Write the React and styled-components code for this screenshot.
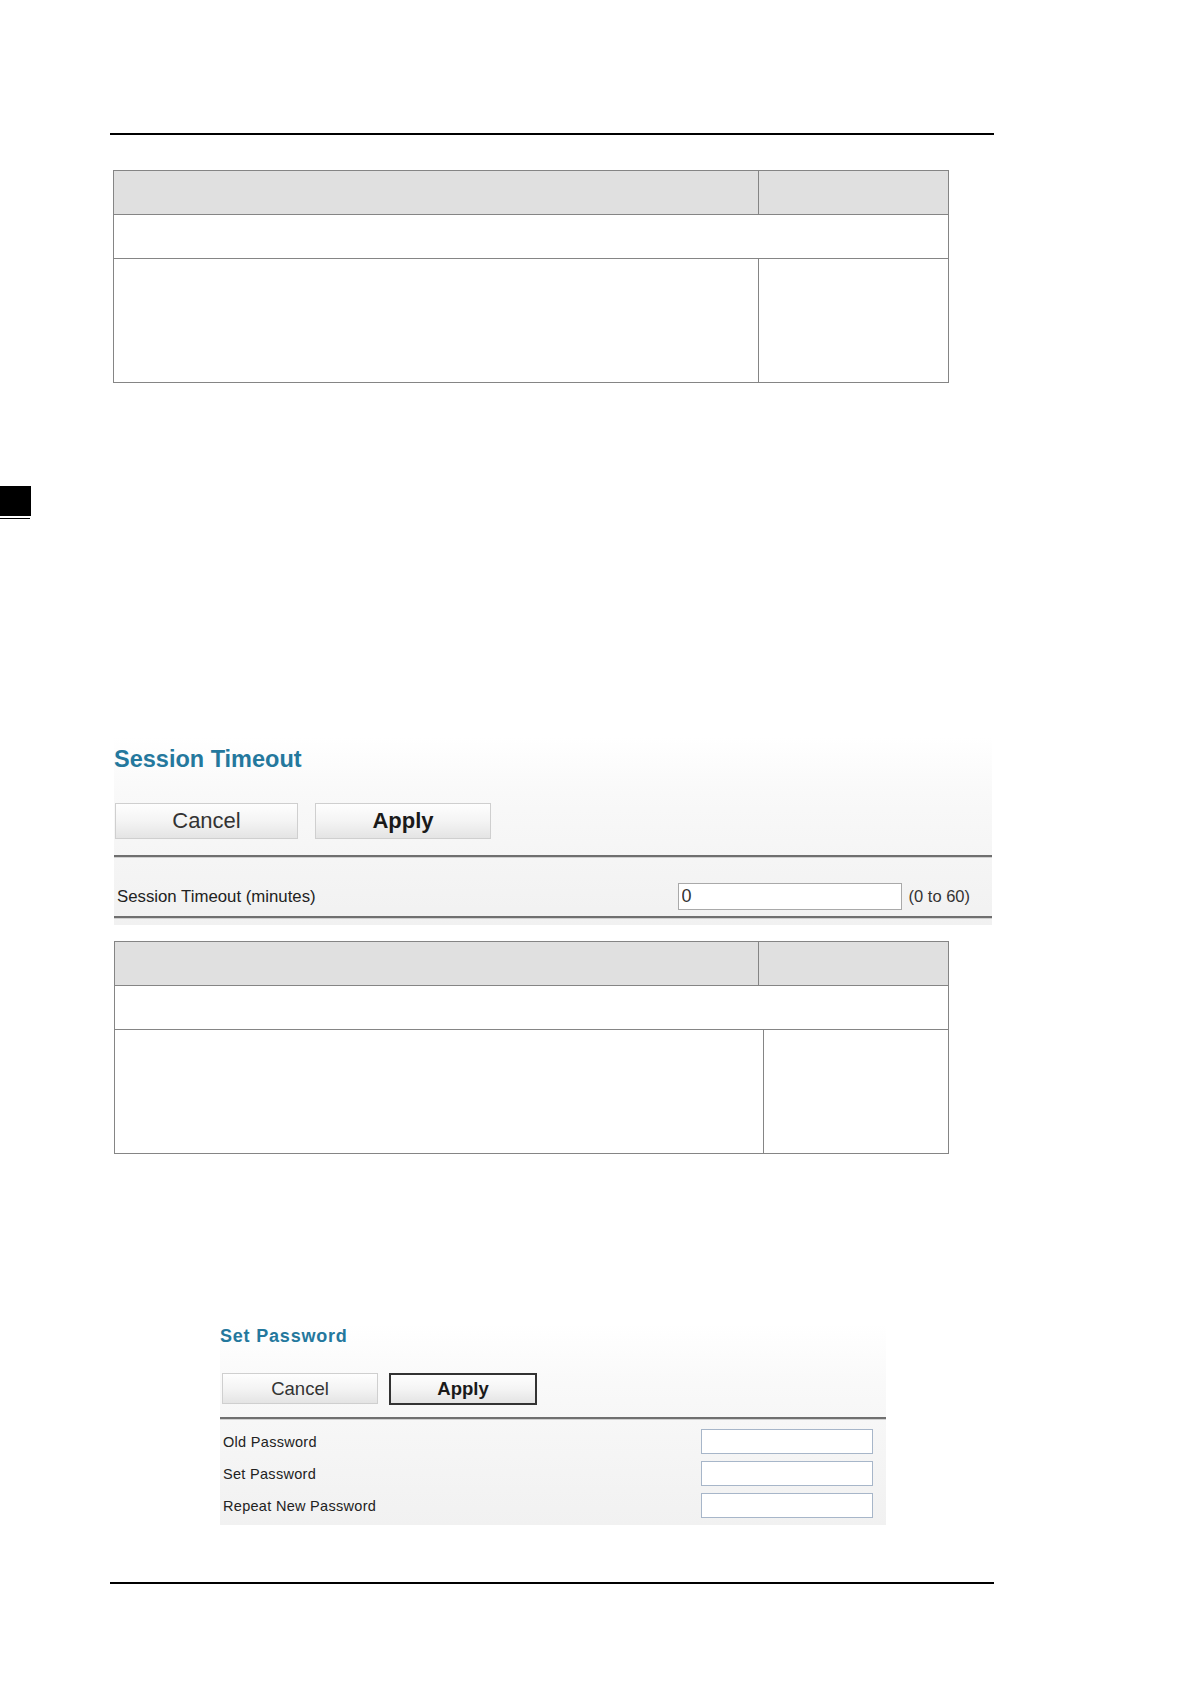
import React from "react";
import styled, { createGlobalStyle } from "styled-components";

const Global = createGlobalStyle`
  html, body { margin: 0; padding: 0; background: #fff; }
  body { font-family: "Liberation Sans", Arial, sans-serif; color: #222; }
  * { box-sizing: border-box; }
`;

const Page = styled.div`
  width: 1191px;
  min-height: 1684px;
  display: flex;
  flex-direction: column;
  background: #fff;
`;

const Rule = styled.div`
  margin-top: ${(p) => p.$top}px;
  margin-left: 110px;
  width: 884px;
  height: ${(p) => p.$thick}px;
  background: #000;
`;

const Table = styled.div`
  margin-top: ${(p) => p.$top}px;
  margin-left: ${(p) => p.$left}px;
  width: ${(p) => 949 - p.$left}px;
  border: 1px solid #858585;
  display: flex;
  flex-direction: column;
`;

const Row = styled.div`
  display: flex;
  height: ${(p) => p.$h}px;
  background: ${(p) => (p.$head ? "#e0e0e0" : "#fff")};
  & + & { border-top: 1px solid #858585; }
`;

const Cell = styled.div`
  flex: ${(p) => (p.$w ? `0 0 ${p.$w}px` : "1 1 auto")};
  & + & {
    border-left: 1px solid #858585;
    box-shadow: ${(p) => (p.$bevel ? "inset 1px 0 0 #fafafa" : "none")};
  }
`;

const Thumb = styled.div`
  margin-top: 103px;
  width: 31px;
  height: 30px;
  background: #000;
`;

const ThumbLine = styled.div`
  margin-top: 2px;
  width: 30px;
  height: 1px;
  background: #000;
`;

const Panel = styled.section`
  margin-top: ${(p) => p.$top}px;
  margin-left: ${(p) => p.$left}px;
  width: ${(p) => p.$width}px;
  padding: ${(p) => p.$pad};
  display: flex;
  flex-direction: column;
  background: linear-gradient(to bottom, #ffffff 0%, #f9f9f9 30%, #f1f1f1 100%);
`;

const Title = styled.h2`
  margin: 0;
  padding-left: ${(p) => p.$indent}px;
  font-family: "Liberation Sans", Arial, sans-serif;
  font-weight: bold;
  font-size: ${(p) => p.$size}px;
  line-height: ${(p) => p.$lh}px;
  letter-spacing: ${(p) => p.$ls}px;
  color: #24789d;
`;

const ButtonBar = styled.div`
  display: flex;
  gap: ${(p) => p.$gap}px;
  margin-top: ${(p) => p.$top}px;
  padding-left: ${(p) => p.$indent}px;
`;

const Button = styled.button`
  width: ${(p) => p.$w}px;
  height: ${(p) => p.$h}px;
  padding: 0;
  font-family: "Liberation Sans", Arial, sans-serif;
  font-size: ${(p) => p.$size}px;
  font-weight: ${(p) => (p.$bold ? "bold" : "normal")};
  color: ${(p) => (p.$bold ? "#1a1a1a" : "#333")};
  background: linear-gradient(to bottom, #fefefe 0%, #f4f4f4 50%, #e4e4e4 100%);
  border: ${(p) => (p.$focus ? "2px solid #333" : "1px solid #cfcfcf")};
  border-radius: 0;
`;

const Divider = styled.div`
  margin-top: ${(p) => p.$top}px;
  height: 2px;
  background: #6f6f6f;
  box-shadow: 0 1px 0 #d0d0d0;
`;

const FieldRow = styled.div`
  display: flex;
  align-items: center;
  height: ${(p) => p.$h}px;
  padding-left: ${(p) => p.$indent}px;
  padding-top: ${(p) => p.$pt || 0}px;
  & + & { margin-top: ${(p) => p.$gap}px; }
`;

const Label = styled.span`
  flex: 1 1 auto;
  font-size: ${(p) => p.$size}px;
  letter-spacing: ${(p) => p.$ls || 0}px;
  color: #222;
`;

const Input = styled.input`
  width: ${(p) => p.$w}px;
  height: ${(p) => p.$h}px;
  margin-right: ${(p) => p.$mr}px;
  padding: 0 3px;
  font-family: "Liberation Sans", Arial, sans-serif;
  font-size: 18px;
  color: #333;
  background: #fff;
  border: 1px solid ${(p) => p.$border};
  border-radius: 0;
  outline: none;
`;

const Hint = styled.span`
  margin-left: 7px;
  margin-right: 22px;
  font-size: 16.5px;
  color: #333;
`;

const FieldList = styled.div`
  display: flex;
  flex-direction: column;
  padding-top: 10px;
`;

function InfoTable({ top, left, splitHead, splitBody }) {
  return (
    <Table $top={top} $left={left}>
      <Row $h={43} $head>
        <Cell $w={splitHead} />
        <Cell $bevel />
      </Row>
      <Row $h={44}>
        <Cell />
      </Row>
      <Row $h={124}>
        <Cell $w={splitBody} />
        <Cell />
      </Row>
    </Table>
  );
}

export default function App() {
  return (
    <Page>
      <Global />
      <Rule $top={133} $thick={2} />
      <InfoTable top={35} left={113} splitHead={644} splitBody={644} />
      <Thumb />
      <ThumbLine />

      <Panel $top={218} $left={114} $width={878} $pad="9px 0 7px 0">
        <Title $size={23.5} $lh={27} $ls={0} $indent={0}>Session Timeout</Title>
        <ButtonBar $top={30} $gap={17} $indent={1}>
          <Button $w={183} $h={36} $size={22}>Cancel</Button>
          <Button $w={176} $h={36} $size={22} $bold>Apply</Button>
        </ButtonBar>
        <Divider $top={16} />
        <FieldRow $h={59} $indent={3} $pt={20}>
          <Label $size={16.8}>Session Timeout (minutes)</Label>
          <Input $w={224} $h={27} $mr={0} $border="#a9a9a9" defaultValue="0" />
          <Hint>(0 to 60)</Hint>
        </FieldRow>
        <Divider $top={0} />
      </Panel>

      <InfoTable top={16} left={114} splitHead={643} splitBody={648} />

      <Panel $top={170} $left={220} $width={666} $pad="1px 0 7px 0">
        <Title $size={18} $lh={22} $ls={0.8} $indent={0}>Set Password</Title>
        <ButtonBar $top={26} $gap={11} $indent={2}>
          <Button $w={156} $h={31} $size={18.5}>Cancel</Button>
          <Button $w={148} $h={32} $size={18.5} $bold $focus>Apply</Button>
        </ButtonBar>
        <Divider $top={12} />
        <FieldList>
          <FieldRow $h={25} $gap={7} $indent={3}>
            <Label $size={14.5} $ls={0.3}>Old Password</Label>
            <Input type="password" $w={172} $h={25} $mr={13} $border="#a7b6c9" />
          </FieldRow>
          <FieldRow $h={25} $gap={7} $indent={3}>
            <Label $size={14.5} $ls={0.3}>Set Password</Label>
            <Input type="password" $w={172} $h={25} $mr={13} $border="#a7b6c9" />
          </FieldRow>
          <FieldRow $h={25} $gap={7} $indent={3}>
            <Label $size={14.5} $ls={0.3}>Repeat New Password</Label>
            <Input type="password" $w={172} $h={25} $mr={13} $border="#a7b6c9" />
          </FieldRow>
        </FieldList>
      </Panel>

      <Rule $top={57} $thick={1.5} />
    </Page>
  );
}
